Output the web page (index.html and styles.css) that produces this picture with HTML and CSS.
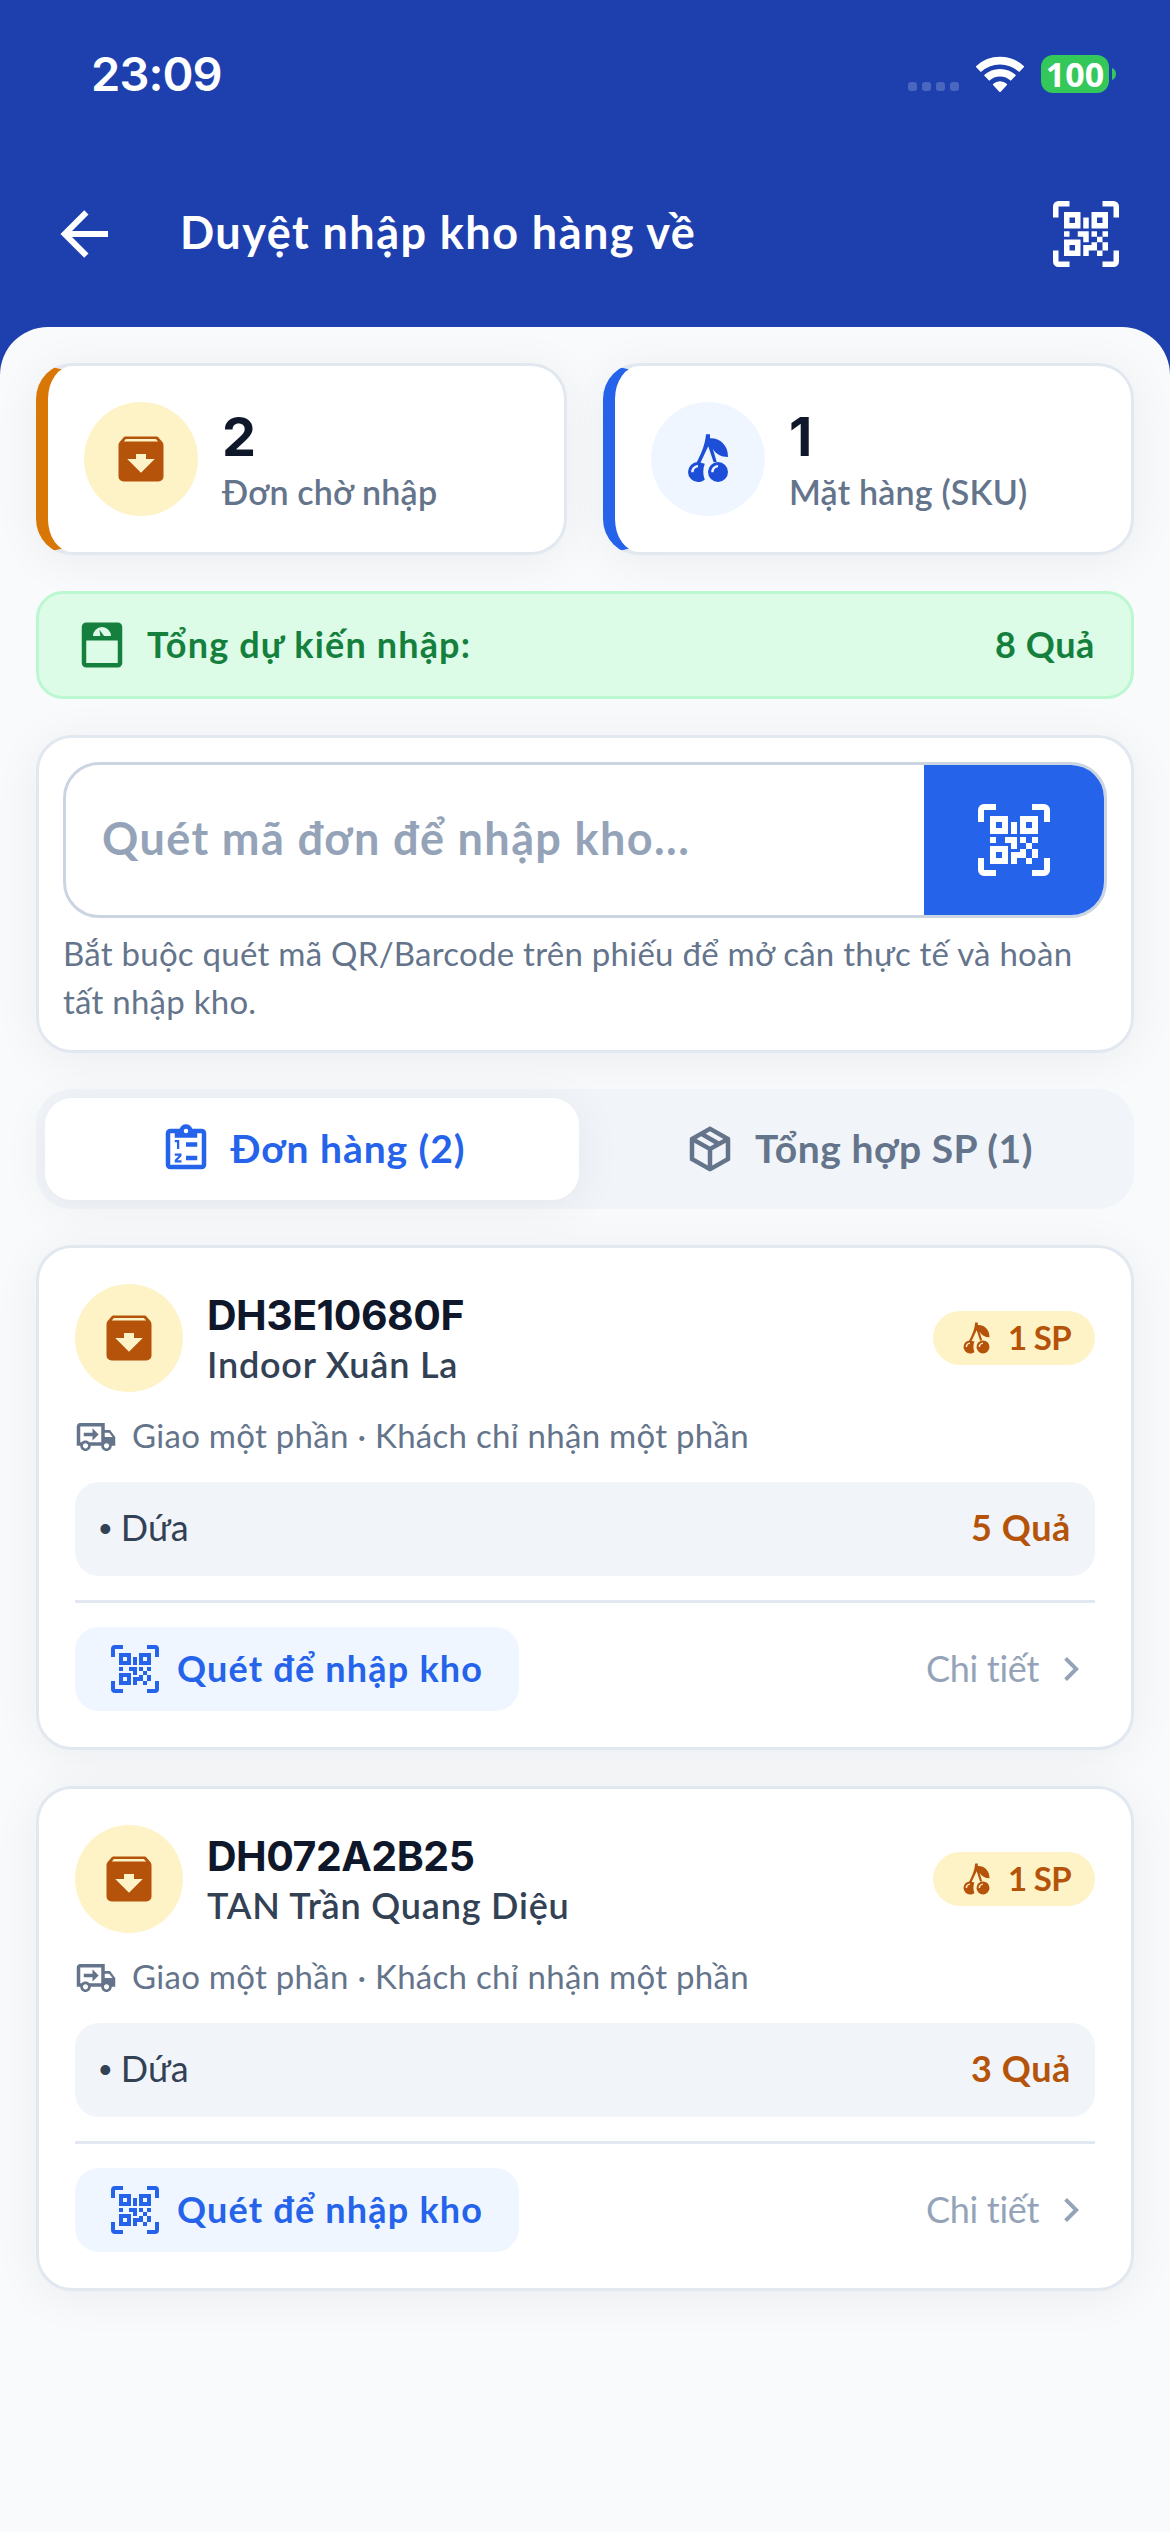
FILE: index.html
```html
<!DOCTYPE html>
<html lang="vi">
<head>
<meta charset="utf-8">
<title>Duyệt nhập kho hàng về</title>
<link rel="stylesheet" href="styles.css">
</head>
<body>
<svg class="sprite" aria-hidden="true">
  <symbol id="back" viewBox="0 0 24 24"><path d="M20,11V13H8L13.5,18.5L12.08,19.92L4.16,12L12.08,4.08L13.5,5.5L8,11H20Z"/></symbol>
  <symbol id="qr" viewBox="0 0 24 24"><path d="M4,4H10V10H4V4M20,4V10H14V4H20M14,15H16V13H14V11H16V13H18V11H20V13H18V15H20V18H18V20H16V18H13V20H11V16H14V15M16,15V18H18V15H16M4,20V14H10V20H4M6,6V8H8V6H6M16,6V8H18V6H16M6,16V18H8V16H6M4,11H6V13H4V11M9,11H13V15H11V13H9V11M11,6H13V10H11V6M2,2V6H0V2A2,2 0 0,1 2,0H6V2H2M22,0A2,2 0 0,1 24,2V6H22V2H18V0H22M2,18V22H6V24H2A2,2 0 0,1 0,22V18H2M22,22V18H24V22A2,2 0 0,1 22,24H18V22H22Z"/></symbol>
  <symbol id="box-down" viewBox="0 0 24 24"><path d="M5.12,5L5.93,4H17.93L18.87,5M20.54,5.23L19.15,3.55C18.88,3.21 18.47,3 18,3H6C5.53,3 5.12,3.21 4.84,3.55L3.46,5.23C3.17,5.57 3,6 3,6.5V19A2,2 0 0,0 5,21H19A2,2 0 0,0 21,19V6.5C21,6 20.83,5.57 20.54,5.23M12,17.5L6.5,12H10V10H14V12H17.5"/></symbol>
  <symbol id="cherries" viewBox="0 0 24 24">
    <path d="M11.2,2.1H12.8V3.7C16.6,3.5 20.1,6.3 20,11.2C17.2,11.2 15,10 13.9,7.8L15.5,13.2H14.2L12.1,6.9L8.9,13.7H7.3C9.2,10.1 10.9,6.2 11.2,2.1Z"/>
    <path d="M8,13.2C9,13.2 9.5,13.7 10.7,13.9C9.9,16 9.9,18.2 10.7,20.3C9.8,21 9,21.2 8,21.2A4,4 0 0,1 8,13.2M8,14.4C6.4,14.6 5.2,15.7 5.3,17.3H6.2C6.4,15.9 7,15.4 8,15.3Z"/>
    <path d="M16,13.2A4,4 0 0,1 16,21.2A4,4 0 0,1 16,13.2M16,14.4C14.4,14.6 13.2,15.7 13.3,17.3H14.2C14.4,15.9 15,15.4 16,15.3Z"/>
  </symbol>
  <symbol id="scale" viewBox="0 0 24 24"><path d="M5,2H19A2,2 0 0,1 21,4V20A2,2 0 0,1 19,22H5A2,2 0 0,1 3,20V4A2,2 0 0,1 5,2M12,4A4,4 0 0,0 8,8H11.26L10.85,5.23L12.9,8H16A4,4 0 0,0 12,4M5,10V20H19V10H5Z"/></symbol>
  <symbol id="orders" viewBox="0 0 24 24"><path d="M19,3H14.82C14.4,1.84 13.3,1 12,1C10.7,1 9.6,1.84 9.18,3H5A2,2 0 0,0 3,5V19A2,2 0 0,0 5,21H19A2,2 0 0,0 21,19V5A2,2 0 0,0 19,3M12,3A1,1 0 0,1 12,5A1,1 0 0,1 12,3M7,7H17V5H19V19H5V5H7V7M12,9H17V11H12V9M12,15H17V17H12V15M7,8H9V12H8V9H7V8M7,14H10V15.1L8.2,17H10V18H7V16.9L8.8,15H7V14Z"/></symbol>
  <symbol id="package" viewBox="0 0 24 24"><path d="M21,16.5C21,16.88 20.79,17.21 20.47,17.38L12.57,21.82C12.41,21.94 12.21,22 12,22C11.79,22 11.59,21.94 11.43,21.82L3.53,17.38C3.21,17.21 3,16.88 3,16.5V7.5C3,7.12 3.21,6.79 3.53,6.62L11.43,2.18C11.59,2.06 11.79,2 12,2C12.21,2 12.41,2.06 12.57,2.18L20.47,6.62C20.79,6.79 21,7.12 21,7.5V16.5M12,4.15L10.11,5.22L16,8.61L17.96,7.5L12,4.15M6.04,7.5L12,10.85L13.96,9.75L8.08,6.35L6.04,7.5M5,15.91L11,19.29V12.58L5,9.21V15.91M19,15.91V9.21L13,12.58V19.29L19,15.91Z"/></symbol>
  <symbol id="truck" viewBox="0 0 24 24"><path d="M18 18.5C18.83 18.5 19.5 17.83 19.5 17C19.5 16.17 18.83 15.5 18 15.5C17.17 15.5 16.5 16.17 16.5 17C16.5 17.83 17.17 18.5 18 18.5M19.5 9.5H17V12H21.46L19.5 9.5M6 18.5C6.83 18.5 7.5 17.83 7.5 17C7.5 16.17 6.83 15.5 6 15.5C5.17 15.5 4.5 16.17 4.5 17C4.5 17.83 5.17 18.5 6 18.5M20 8L23 12V17H21C21 18.66 19.66 20 18 20C16.34 20 15 18.66 15 17H9C9 18.66 7.66 20 6 20C4.34 20 3 18.66 3 17H1V6C1 4.89 1.89 4 3 4H17V8H20M3 6V15H3.76C4.31 14.39 5.11 14 6 14C6.89 14 7.69 14.39 8.24 15H15V6H3M5 9.5H10V7L13.5 10.5L10 14V11.5H5V9.5Z"/></symbol>
  <symbol id="chevron" viewBox="0 0 24 24"><path d="M8.59,16.58L13.17,12L8.59,7.41L10,6L16,12L10,18L8.59,16.58Z"/></symbol>
</svg>

<header class="header">
  <div class="status">
    <span class="time">23:09</span>
    <div class="indicators">
      <span class="dots"><i></i><i></i><i></i><i></i></span>
      <svg class="wifi" viewBox="0 0 48 36">
        <path class="arc" d="M2.2,13.3A31.6,31.6 0 0 1 45.8,13.3"/>
        <path class="arc" d="M10.6,22.1A19.3,19.3 0 0 1 37.4,22.1"/>
        <path class="wedge" d="M24,35L18,28.6A8.8,8.8 0 0 1 30,28.6Z"/>
      </svg>
      <span class="battery"><b>100</b><svg class="nub" viewBox="0 0 4 12"><path d="M0,0A6.5,6.5 0 0 1 0,12Z"/></svg></span>
    </div>
  </div>
  <div class="appbar">
    <svg class="icon back"><use href="#back"/></svg>
    <h1>Duyệt nhập kho hàng về</h1>
    <svg class="icon scan"><use href="#qr"/></svg>
  </div>
</header>

<main class="sheet">
  <section class="stats">
    <div class="stat pending">
      <span class="round"><svg class="icon"><use href="#box-down"/></svg></span>
      <div><strong>2</strong><span class="label">Đơn chờ nhập</span></div>
    </div>
    <div class="stat sku">
      <span class="round"><svg class="icon"><use href="#cherries"/></svg></span>
      <div><strong>1</strong><span class="label">Mặt hàng (SKU)</span></div>
    </div>
  </section>

  <section class="total">
    <svg class="icon"><use href="#scale"/></svg>
    <span class="name">Tổng dự kiến nhập:</span>
    <span class="qty">8 Quả</span>
  </section>

  <section class="card search">
    <div class="field">
      <span class="placeholder">Quét mã đơn để nhập kho...</span>
      <span class="go"><svg class="icon"><use href="#qr"/></svg></span>
    </div>
    <p>Bắt buộc quét mã QR/Barcode trên phiếu để mở cân thực tế và hoàn<br>tất nhập kho.</p>
  </section>

  <nav class="tabs">
    <span class="tab active"><svg class="icon"><use href="#orders"/></svg><span>Đơn hàng (2)</span></span>
    <span class="tab"><svg class="icon"><use href="#package"/></svg><span>Tổng hợp SP (1)</span></span>
  </nav>

  <article class="card order">
    <div class="top">
      <span class="round"><svg class="icon"><use href="#box-down"/></svg></span>
      <div class="who"><h2>DH3E10680F</h2><span>Indoor Xuân La</span></div>
      <span class="badge"><svg class="icon"><use href="#cherries"/></svg><span>1 SP</span></span>
    </div>
    <div class="reason"><svg class="icon"><use href="#truck"/></svg><span>Giao một phần · Khách chỉ nhận một phần</span></div>
    <div class="item"><span><span class="bullet">•</span> Dứa</span><b>5 Quả</b></div>
    <div class="foot">
      <span class="button"><svg class="icon"><use href="#qr"/></svg><span>Quét để nhập kho</span></span>
      <span class="detail"><span>Chi tiết</span><svg class="icon"><use href="#chevron"/></svg></span>
    </div>
  </article>

  <article class="card order">
    <div class="top">
      <span class="round"><svg class="icon"><use href="#box-down"/></svg></span>
      <div class="who"><h2>DH072A2B25</h2><span>TAN Trần Quang Diệu</span></div>
      <span class="badge"><svg class="icon"><use href="#cherries"/></svg><span>1 SP</span></span>
    </div>
    <div class="reason"><svg class="icon"><use href="#truck"/></svg><span>Giao một phần · Khách chỉ nhận một phần</span></div>
    <div class="item"><span><span class="bullet">•</span> Dứa</span><b>3 Quả</b></div>
    <div class="foot">
      <span class="button"><svg class="icon"><use href="#qr"/></svg><span>Quét để nhập kho</span></span>
      <span class="detail"><span>Chi tiết</span><svg class="icon"><use href="#chevron"/></svg></span>
    </div>
  </article>
</main>
</body>
</html>
```
FILE: styles.css
```css
* { box-sizing: border-box; }

body {
  margin: 0;
  min-height: 2532px;
  display: flex;
  flex-direction: column;
  background: #1e40af;
  color: #0f172a;
  font-family: Lato, "Noto Sans", sans-serif;
  font-variant-ligatures: none;
}

h1, h2, p { margin: 0; }
.sprite { display: none; }
.icon { display: block; flex: none; fill: currentColor; fill-rule: evenodd; }

/* Header */
.header { height: 327px; color: #fff; }
.status {
  height: 148px;
  padding: 0 54px 0 91px;
  display: flex;
  align-items: center;
  justify-content: space-between;
}
.time { font: 600 47px/60px Inter, sans-serif; letter-spacing: -0.9px; }
.indicators { display: flex; align-items: center; }
.dots { display: flex; gap: 5px; padding-top: 25px; margin-right: 17px; }
.dots i { width: 9px; height: 9px; border-radius: 3px; background: rgba(255, 255, 255, 0.2); }
.wifi { width: 48px; height: 36px; margin-right: 17px; }
.wifi .arc { fill: none; stroke: #fff; stroke-width: 7.6; }
.wifi .wedge { fill: #fff; stroke: #fff; stroke-width: 2; stroke-linejoin: round; }
.battery { display: flex; align-items: center; gap: 3px; }
.battery b {
  width: 68px;
  height: 38px;
  border-radius: 12px;
  background: #34c759;
  font: 700 34px/38px "Noto Sans", sans-serif;
  text-align: center;
}
.nub { width: 4px; height: 12px; fill: #34c759; }

.appbar {
  height: 171px;
  padding: 0 51px 0 48px;
  display: flex;
  align-items: center;
}
.back { width: 72px; height: 72px; margin-right: 60px; }
.appbar h1 { flex: 1; padding-bottom: 4px; font-size: 45px; font-weight: 700; line-height: 60px; letter-spacing: 1.45px; }
.scan { width: 66px; height: 66px; }

/* Content sheet */
.sheet {
  flex: 1;
  padding: 36px;
  display: flex;
  flex-direction: column;
  gap: 36px;
  border-radius: 48px 48px 0 0;
  background: #f8fafc;
}
.card, .stat {
  border: 3px solid #e2e8f0;
  border-radius: 36px;
  background: #fff;
  box-shadow: 0 6px 48px rgba(15, 23, 42, 0.06);
}
.round {
  flex: none;
  display: flex;
  align-items: center;
  justify-content: center;
  border-radius: 50%;
  background: #fef3c7;
  color: #b45309;
}
.round .icon { width: 60px; height: 60px; }

.stats { display: grid; grid-template-columns: 1fr 1fr; gap: 36px; }
.stat { height: 192px; padding: 0 36px; display: flex; align-items: center; gap: 24px; border-left-width: 12px; }
.stat .round { width: 114px; height: 114px; }
.stat strong { display: block; font-family: Inter, sans-serif; font-size: 54px; line-height: 66px; font-weight: 700; }
.stat .label { display: block; font-size: 34px; line-height: 44px; font-weight: 600; letter-spacing: 0.2px; color: #64748b; }
.pending { border-left-color: #d97706; }
.sku { border-left-color: #2563eb; }
.sku .round { background: #eff6ff; color: #1d4ed8; }

.total {
  height: 108px;
  padding: 0 36px;
  display: flex;
  align-items: center;
  gap: 18px;
  border: 3px solid #bbf7d0;
  border-radius: 27px;
  background: #dcfce7;
  color: #15803d;
  font-size: 36px;
  font-weight: 700;
}
.total .icon { width: 54px; height: 54px; }
.total span { padding-bottom: 3px; letter-spacing: 1.15px; }
.total .qty { margin-left: auto; letter-spacing: 0.6px; }

.search { height: 318px; padding: 24px; }
.field {
  height: 156px;
  display: flex;
  border: 3px solid #cbd5e1;
  border-radius: 36px;
  overflow: hidden;
}
.placeholder {
  flex: 1;
  padding-left: 36px;
  color: #94a3b8;
  font-size: 45px;
  font-weight: 700;
  line-height: 147px;
  letter-spacing: 1.38px;
}
.go { width: 180px; display: flex; align-items: center; justify-content: center; background: #2563eb; color: #fff; }
.go .icon { width: 72px; height: 72px; }
.search p { margin-top: 11px; color: #64748b; font-size: 33px; line-height: 48px; letter-spacing: 0.25px; white-space: nowrap; }

.tabs { height: 120px; padding: 9px; display: flex; gap: 12px; border-radius: 36px; background: #f1f5f9; }
.tab {
  flex: 1;
  display: flex;
  align-items: center;
  justify-content: center;
  gap: 18px;
  border-radius: 27px;
  color: #64748b;
  font-size: 39px;
  font-weight: 700;
  letter-spacing: 0.55px;
}
.tab .icon { width: 54px; height: 54px; }
.tab span { padding-bottom: 3px; }
.tab.active { background: #fff; color: #2563eb; letter-spacing: 0.95px; box-shadow: 0 6px 48px rgba(15, 23, 42, 0.06); }

/* Order card */
.order { height: 505px; padding: 36px; }
.top { display: flex; align-items: center; gap: 24px; }
.top .round { width: 108px; height: 108px; }
.who { flex: 1; }
.who h2 { font-family: Inter, sans-serif; font-size: 41px; line-height: 51px; font-weight: 700; letter-spacing: -0.5px; }
.who span { display: block; color: #334155; font-size: 36px; line-height: 46px; font-weight: 600; letter-spacing: 0.8px; }
.badge {
  height: 54px;
  padding: 0 24px;
  display: flex;
  align-items: center;
  gap: 12px;
  border-radius: 27px;
  background: #fef3c7;
  color: #b45309;
  font-size: 33px;
  font-weight: 700;
  letter-spacing: -0.7px;
}
.badge .icon { width: 39px; height: 39px; }
.badge span { padding-bottom: 2px; }
.reason { height: 42px; margin-top: 24px; display: flex; align-items: center; gap: 15px; color: #64748b; font-size: 33px; letter-spacing: 0.28px; }
.reason .icon { width: 42px; height: 42px; }
.reason span { padding-bottom: 4px; }
.item {
  height: 94px;
  margin-top: 24px;
  padding: 0 24px 4px;
  display: flex;
  align-items: center;
  justify-content: space-between;
  border-radius: 24px;
  background: #f1f5f9;
  color: #334155;
  font-size: 36px;
}
.bullet { font-family: "Liberation Sans", sans-serif; line-height: 1; }
.item b { color: #b45309; letter-spacing: 0.6px; }
.foot {
  margin-top: 24px;
  padding-top: 24px;
  display: flex;
  align-items: center;
  justify-content: space-between;
  border-top: 3px solid #e2e8f0;
  font-size: 36px;
}
.foot span span { padding-bottom: 3px; }
.button {
  height: 84px;
  padding: 0 36px;
  display: flex;
  align-items: center;
  gap: 18px;
  border-radius: 24px;
  background: #eff6ff;
  color: #2563eb;
  font-weight: 700;
  letter-spacing: 1.2px;
}
.button .icon { width: 48px; height: 48px; }
.detail { display: flex; align-items: center; gap: 8px; color: #94a3b8; letter-spacing: -0.3px; }
.detail .icon { width: 48px; height: 48px; }
```
